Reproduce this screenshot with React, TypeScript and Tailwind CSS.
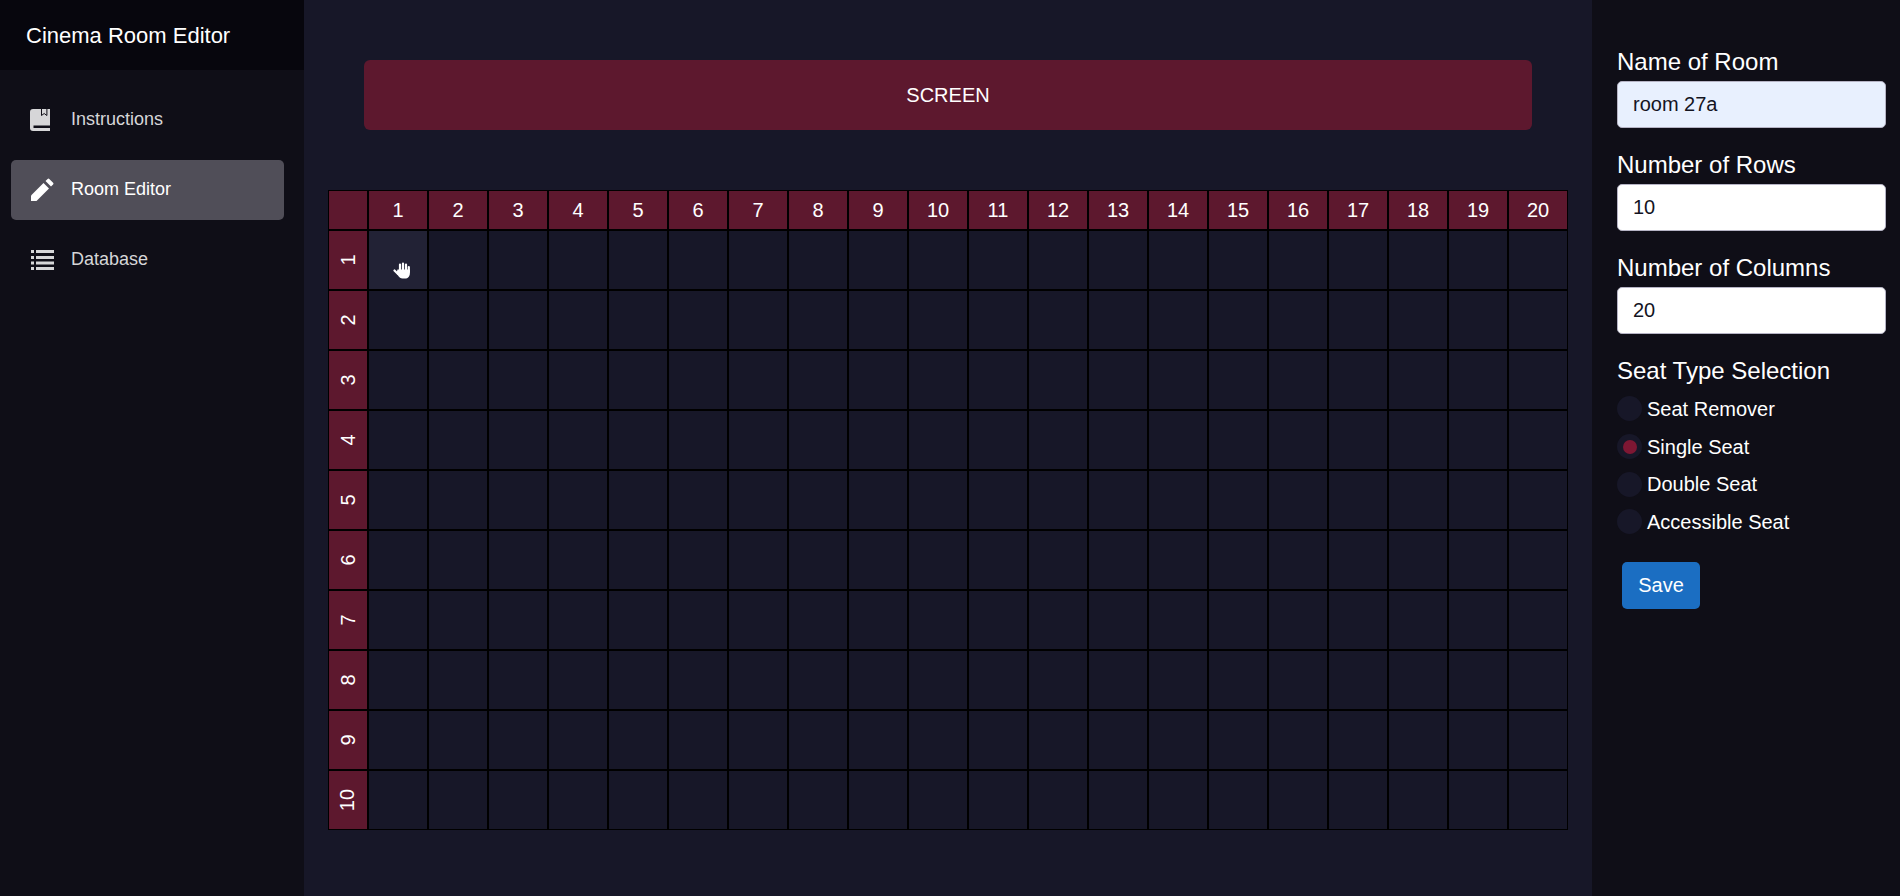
const columns = Array.from({ length: 20 }, (_, i) => i + 1);
const rows = Array.from({ length: 10 }, (_, i) => i + 1);

const BookIcon = () => (
  <svg viewBox="0 0 20 22" className="h-[22px] w-[20px]">
    <path d="M3 0h17v22H3a3 3 0 0 1-3-3V3a3 3 0 0 1 3-3z" fill="#d6d6d8" />
    <path d="M11.5 0v6.5l2.7-2 2.7 2V0" fill="none" stroke="#0f0e17" strokeWidth="1" />
    <path d="M3.5 16.5H20v2.5H3.5z" fill="#0f0e17" />
  </svg>
);

const PenIcon = () => (
  <svg viewBox="0 0 24 24" className="h-[24px] w-[24px]" fill="#fff">
    <path d="M1 23v-5.5L13.5 5 19 10.5 6.5 23z" />
    <path d="M15.5 3 17.6.9a1.2 1.2 0 0 1 1.7 0l3.8 3.8a1.2 1.2 0 0 1 0 1.7L21 8.5z" />
  </svg>
);

const ListIcon = () => (
  <svg viewBox="0 0 23 22" className="ml-[1px] h-[22px] w-[23px]" fill="#d6d6d8">
    <path d="M0 1h3v3H0zM0 7h3v3H0zM0 12.5h3v3H0zM0 18h3v3H0z" />
    <path d="M5 1h18v3H5zM5 7h18v3H5zM5 12.5h18v3H5zM5 18h18v3H5z" />
  </svg>
);

const HandCursor = () => (
  <svg viewBox="0 0 18 17" className="absolute left-[24px] top-[31px] h-[17px] w-[18px]">
    <path
      d="M7 2.5V9M10 1.5V9M13 2.5V9M15.8 5V10M1.5 8.5l3.5 3.5"
      stroke="#fff"
      strokeWidth="2.2"
      strokeLinecap="round"
      fill="none"
    />
    <path d="M4.5 7.5h12.4V11c0 3.5-2 5.5-4.9 5.5H9.5c-2 0-3.2-1-4.5-3L3.5 11z" fill="#fff" />
  </svg>
);

const nav = [
  { label: "Instructions", icon: <BookIcon />, active: false },
  { label: "Room Editor", icon: <PenIcon />, active: true },
  { label: "Database", icon: <ListIcon />, active: false },
];

const Field = ({ label, value, autofill }: { label: string; value: string; autofill?: boolean }) => (
  <div className="mb-[23px]">
    <label className="block text-[24px] leading-[28px] text-white">{label}</label>
    <input
      readOnly
      value={value}
      className={`mt-[5px] block h-[47px] w-[269px] rounded-[5px] border border-[#b5b3c4] px-[15px] text-[20px] text-[#14141f] ${
        autofill ? "bg-[#e8f0fe]" : "bg-white"
      }`}
    />
  </div>
);

const seatTypes = ["Seat Remover", "Single Seat", "Double Seat", "Accessible Seat"];

export default function App() {
  return (
    <div className="flex h-[896px] w-[1900px] overflow-hidden bg-[#171728] font-['Liberation_Sans',Arial,sans-serif]">
      {/* Sidebar */}
      <aside className="w-[304px] shrink-0 bg-[#0f0e17]">
        <div className="flex h-[70px] items-center bg-[#07060d] pl-[26px] text-[22px] text-white">
          Cinema Room Editor
        </div>
        <nav className="flex flex-col gap-[10px] pl-[11px] pr-[20px] pt-[20px]">
          {nav.map((item) => (
            <div
              key={item.label}
              className={`flex h-[60px] items-center rounded-[5px] pl-[19px] text-[18px] ${
                item.active ? "bg-[#504e58] text-white" : "text-[#d6d6d8]"
              }`}
            >
              <span className="flex w-[41px] items-center">{item.icon}</span>
              <span className="mb-[1px]">{item.label}</span>
            </div>
          ))}
        </nav>
      </aside>

      {/* Main */}
      <main className="w-[1288px] shrink-0 pl-[24px] pt-[60px]">
        <div className="ml-[36px] flex h-[70px] w-[1168px] items-center justify-center rounded-[6px] bg-[#5d182e] text-[20px] text-white">
          SCREEN
        </div>
        <div className="mt-[60px] grid w-[1240px] grid-cols-[40px_repeat(20,60px)] grid-rows-[40px_repeat(10,60px)]">
          <div className="border border-black bg-[#5d182e]" />
          {columns.map((c) => (
            <div key={c} className="flex items-center justify-center border border-black bg-[#5d182e] text-[20px] text-white">
              {c}
            </div>
          ))}
          {rows.map((r) => (
            <div key={r} className="contents">
              <div className="flex items-center justify-center border border-black bg-[#5d182e] pr-[1px] text-[20px] text-white">
                <span className="-rotate-90">{r}</span>
              </div>
              {columns.map((c) => (
                <div
                  key={c}
                  className={`relative border border-black ${r === 1 && c === 1 ? "bg-[#222235]" : "bg-[#171728]"}`}
                >
                  {r === 1 && c === 1 && <HandCursor />}
                </div>
              ))}
            </div>
          ))}
        </div>
      </main>

      {/* Settings */}
      <aside className="flex-1 bg-[#0f0e17] pl-[25px] pt-[48px]">
        <Field label="Name of Room" value="room 27a" autofill />
        <Field label="Number of Rows" value="10" />
        <Field label="Number of Columns" value="20" />
        <div className="text-[24px] leading-[28px] text-white">Seat Type Selection</div>
        <div className="mt-[5px] flex flex-col">
          {seatTypes.map((s) => (
            <label key={s} className="flex h-[37.7px] items-center text-[20px] text-white">
              <span className="flex h-[25px] w-[25px] items-center justify-center rounded-full bg-[#171728]">
                {s === "Single Seat" && <span className="h-[14px] w-[14px] rounded-full bg-[#7e1733]" />}
              </span>
              <span className="ml-[5px]">{s}</span>
            </label>
          ))}
        </div>
        <button className="ml-[5px] mt-[21px] h-[47px] w-[78px] rounded-[5px] bg-[#1b6ec2] text-[20px] text-white">
          Save
        </button>
      </aside>
    </div>
  );
}
